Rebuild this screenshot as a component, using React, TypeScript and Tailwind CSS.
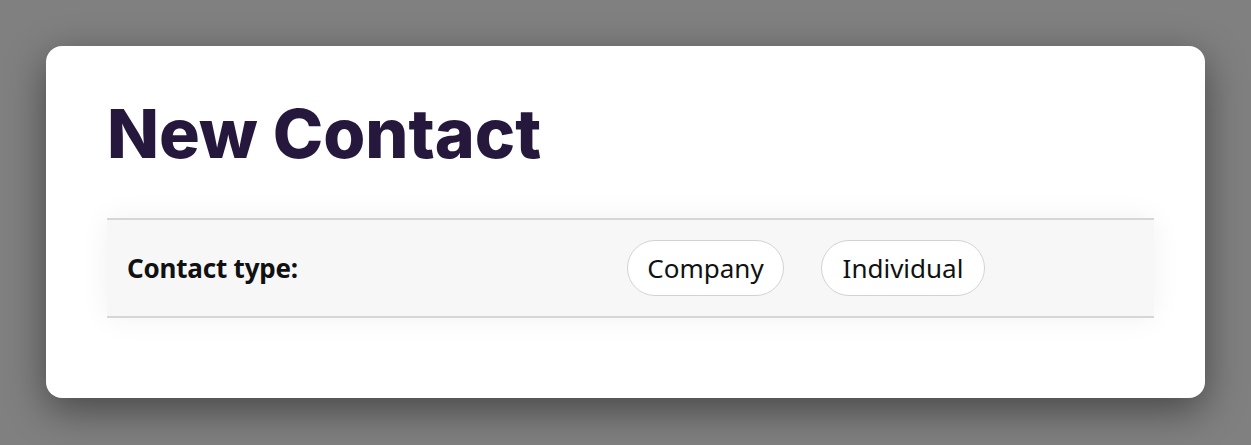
export default function App() {
  return (
    <div className="w-[1251px] h-[445px] bg-[#808080] pt-[46px] pl-[46px]">
      <div className="w-[1159px] h-[352px] bg-white rounded-[16px] shadow-[0_12px_40px_rgba(0,0,0,0.45)] pt-[53px] pl-[61px]">
        <h1
          className="text-[68px] leading-none font-extrabold text-[#26183d] tracking-[0px]"
          style={{ fontFamily: '"Inter", sans-serif' }}
        >
          New Contact
        </h1>
        <div className="mt-[51px] w-[1047px] h-[100px] bg-[#f7f7f7] border-y-2 border-[#d6d6d6] shadow-[0_0_28px_rgba(0,0,0,0.06)] flex items-center pl-[20px]">
          <div
            className="w-[500px] text-[26px] font-bold text-[#111] tracking-[-0.2px]"
            style={{ fontFamily: '"Noto Sans", sans-serif' }}
          >
            Contact type:
          </div>
          <div className="flex gap-[37px]" style={{ fontFamily: '"Noto Sans", sans-serif' }}>
            <button className="h-[56px] w-[157px] rounded-full border border-[#d2d2d2] bg-white text-[26px] text-[#111]">
              Company
            </button>
            <button className="h-[56px] w-[164px] rounded-full border border-[#d2d2d2] bg-white text-[26px] text-[#111]">
              Individual
            </button>
          </div>
        </div>
      </div>
    </div>
  );
}
